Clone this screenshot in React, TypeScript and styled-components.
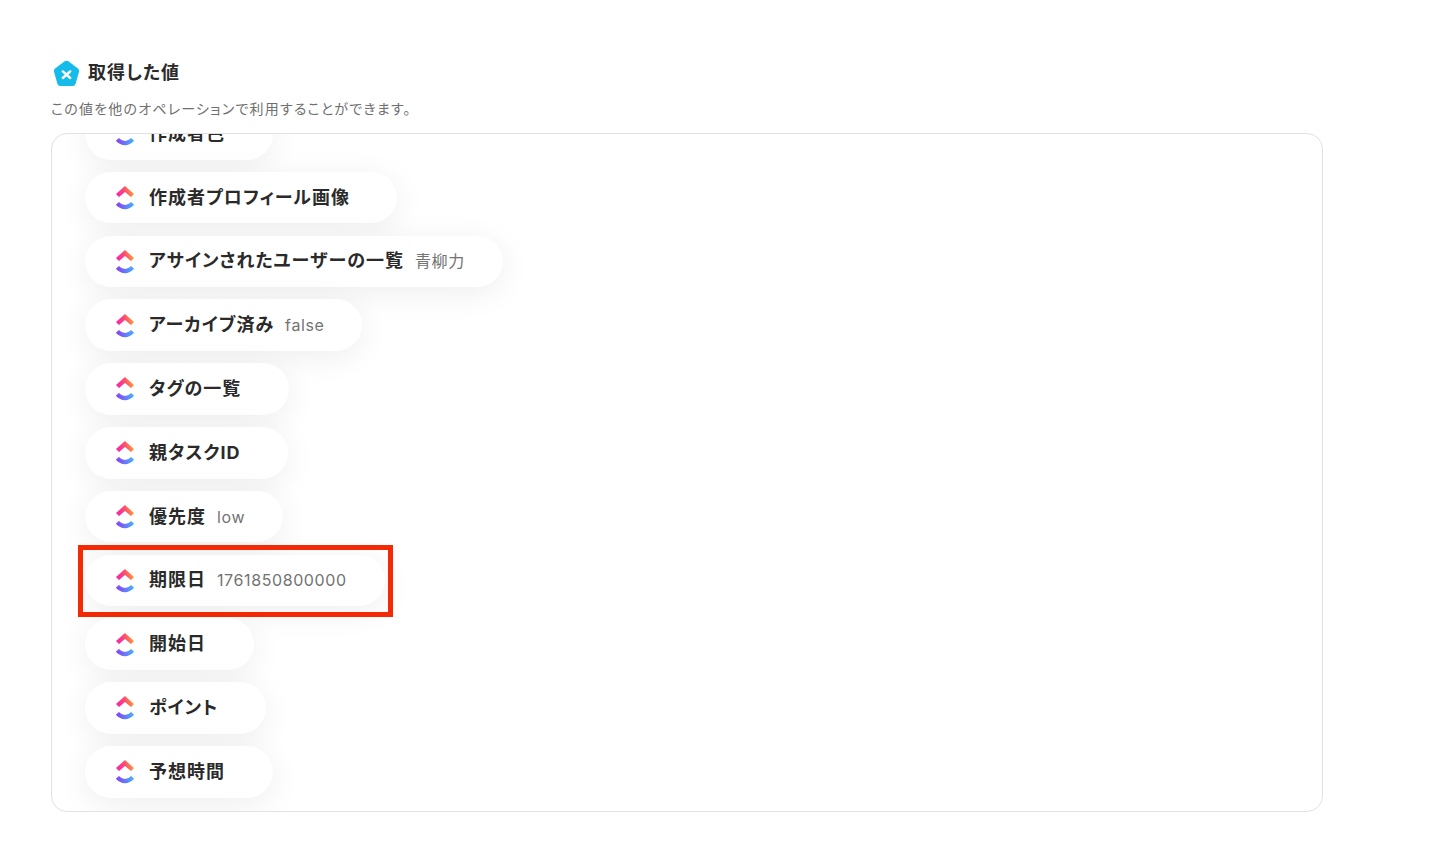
import React from "react";
import styled, { createGlobalStyle } from "styled-components";

const Global = createGlobalStyle`
  html, body { margin: 0; padding: 0; background: #fff; }
  body {
    font-family: Inter, "Noto Sans CJK JP", "Noto Sans", sans-serif;
    font-feature-settings: "palt";
    color: #2a2a2a;
  }
`;

const Page = styled.div`
  width: 1430px;
  height: 854px;
  overflow: hidden;
  padding: 59px 0 0 51px;
  box-sizing: border-box;
`;

const Heading = styled.div`
  display: flex;
  align-items: center;
  gap: 8px;
  height: 28px;
  padding-left: 2px;
`;

const Title = styled.h2`
  margin: 0;
  font-size: 18px;
  font-weight: 700;
  line-height: 28px;
  letter-spacing: 1px;
  color: #2a2a2a;
`;

const Sub = styled.p`
  margin: 12px 0 0;
  font-size: 14px;
  line-height: 20px;
  letter-spacing: 1.2px;
  color: #6f6f6f;
`;

const Panel = styled.div`
  margin-top: 14px;
  width: 1272px;
  height: 679px;
  box-sizing: border-box;
  border: 1px solid #e2e2e2;
  border-radius: 16px;
  overflow: hidden;
  display: flex;
  flex-direction: column;
  justify-content: flex-end;
  align-items: flex-start;
  gap: 12.3px;
  padding: 0 0 13.5px 33px;
`;

const Row = styled.div`
  position: relative;
  flex: none;
`;

const Pill = styled.div`
  display: flex;
  align-items: center;
  height: 51.5px;
  box-sizing: border-box;
  padding: 0 38px 0 30px;
  border-radius: 26px;
  background: #fff;
  box-shadow: 0 6px 32px rgba(0, 0, 0, 0.07);
`;

const Name = styled.span`
  margin-left: 14px;
  margin-right: 9.5px;
  font-size: 18px;
  font-weight: 700;
  line-height: 24px;
  letter-spacing: 1px;
  color: #2a2a2a;
  white-space: nowrap;
`;

const Value = styled.span`
  margin-left: 1.5px;
  font-size: 16px;
  line-height: 24px;
  letter-spacing: 0.6px;
  color: #737373;
  white-space: nowrap;
`;

const Highlight = styled.div`
  position: absolute;
  left: -7px;
  top: -10px;
  width: 315px;
  height: 72px;
  box-sizing: border-box;
  border: 5px solid #f42a06;
  pointer-events: none;
`;

const ClickUpIcon = ({ id }: { id: string }) => (
  <svg width="20" height="25" viewBox="0 0 20 25" fill="none" style={{ flex: "none" }}>
    <defs>
      <linearGradient id={`${id}a`} x1="1" y1="10" x2="19" y2="4" gradientUnits="userSpaceOnUse">
        <stop offset="0" stopColor="#fb1fb4" />
        <stop offset="0.5" stopColor="#fd4a72" />
        <stop offset="1" stopColor="#ffb02a" />
      </linearGradient>
      <linearGradient id={`${id}b`} x1="1" y1="20" x2="19" y2="20" gradientUnits="userSpaceOnUse">
        <stop offset="0" stopColor="#8a3cf4" />
        <stop offset="1" stopColor="#45b5fc" />
      </linearGradient>
    </defs>
    <path d="M10 1 L19 9 L16 12 L10 7 L4 12 L1 9 Z" fill={`url(#${id}a)`} />
    <path d="M2.4 18.4 C4.6 20.8 7 22.2 10 22.2 C13 22.2 15.4 20.8 17.6 18.4" stroke={`url(#${id}b)`} strokeWidth="4.2" />
  </svg>
);

const LogoBadge = () => (
  <svg width="27" height="27" viewBox="0 0 27 27" style={{ flex: "none" }}>
    <path
      d="M11.6 1.3 Q13.5 0 15.4 1.3 L24.9 8.4 Q26.7 9.7 26 11.8 L22.6 23.7 Q22 25.9 19.8 25.9 L7.2 25.9 Q5 25.9 4.4 23.7 L1 11.8 Q0.3 9.7 2.1 8.4 Z"
      fill="#16bce9"
    />
    <path d="M9.8 11.4 L17.2 18 M17.2 11.4 L9.8 18" stroke="#fff" strokeWidth="2.4" strokeLinecap="round" />
  </svg>
);

const items: { name: string; value?: string; marked?: boolean }[] = [
  { name: "作成者色" },
  { name: "作成者プロフィール画像" },
  { name: "アサインされたユーザーの一覧", value: "青柳力" },
  { name: "アーカイブ済み", value: "false" },
  { name: "タグの一覧" },
  { name: "親タスクID" },
  { name: "優先度", value: "low" },
  { name: "期限日", value: "1761850800000", marked: true },
  { name: "開始日" },
  { name: "ポイント" },
  { name: "予想時間" },
];

export default function App() {
  return (
    <Page>
      <Global />
      <Heading>
        <LogoBadge />
        <Title>取得した値</Title>
      </Heading>
      <Sub>この値を他のオペレーションで利用することができます。</Sub>
      <Panel>
        {items.map((item, i) => (
          <Row key={item.name}>
            <Pill>
              <ClickUpIcon id={`cu${i}`} />
              <Name>{item.name}</Name>
              {item.value && <Value>{item.value}</Value>}
            </Pill>
            {item.marked && <Highlight />}
          </Row>
        ))}
      </Panel>
    </Page>
  );
}
